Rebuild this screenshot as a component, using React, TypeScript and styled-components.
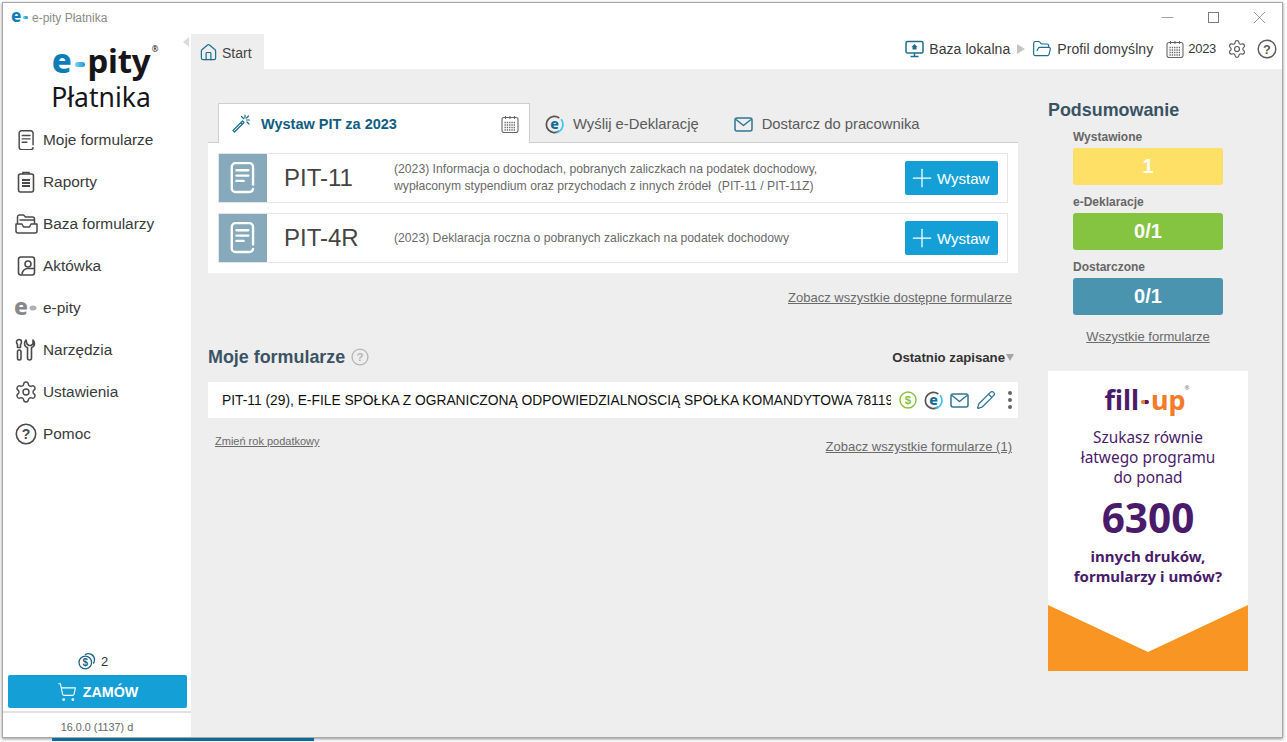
import React from "react";
import styled, { createGlobalStyle } from "styled-components";
import { Settings, Pencil, ShoppingCart, Plus, House, FolderOpen, Minus, X } from "lucide-react";

const GlobalStyle = createGlobalStyle`
  html {
    overflow: hidden;
  }
  body {
    margin: 0;
    padding: 0;
    min-height: 100vh;
    background: #fff;
    font-family: "Liberation Sans", Arial, sans-serif;
  }
  * { box-sizing: border-box; }
`;

const Window = styled.div`
  position: relative;
  width: 1281px;
  height: 736px;
  margin: 2px 0 0 2px;
  border: 1px solid #a8a8a8;
  box-shadow: 0 1px 3px rgba(0, 0, 0, 0.45);
  background: #fff;
  display: flex;
  flex-direction: column;
`;

const TitleBar = styled.div`
  height: 29px;
  flex: none;
  display: flex;
  align-items: center;
  padding-left: 8px;
  font-size: 12px;
  color: #8a8a8a;
`;

const TitleMark = styled.span`
  font-family: "Noto Sans", sans-serif;
  font-weight: 800;
  font-size: 17px;
  line-height: 20px;
  color: #0f7db5;
  width: 21px;
  margin-top: -3px;
  display: flex;
  align-items: center;
`;

const TitleDot = styled.i`
  display: block;
  width: 5px;
  height: 3px;
  margin: 2px 0 0 2px;
  border-radius: 2px;
  background: linear-gradient(90deg, #6fcdf0, #128fcc);
`;

const WindowControls = styled.div`
  margin-left: auto;
  display: flex;
  color: #7d7d7d;
  margin-top: -1px;
`;

const WindowControl = styled.div`
  width: 46px;
  display: flex;
  justify-content: center;
  align-items: center;
  height: 20px;
`;

const MaxBox = styled.div`
  width: 11px;
  height: 11px;
  border: 1px solid #7d7d7d;
`;

const Body = styled.div`
  flex: 1;
  display: flex;
  min-height: 0;
`;

const Sidebar = styled.aside`
  position: relative;
  width: 188px;
  flex: none;
  display: flex;
  flex-direction: column;
  background: #fff;
`;

const CollapseArrow = styled.div`
  position: absolute;
  top: 5px;
  right: 2px;
  width: 0;
  height: 0;
  border-top: 5px solid transparent;
  border-bottom: 5px solid transparent;
  border-right: 6px solid #dcdcdc;
`;

const Logo = styled.div`
  height: 87px;
  flex: none;
  display: flex;
  flex-direction: column;
  align-items: center;
  padding-left: 8px;
  font-family: "Noto Sans", sans-serif;
  color: #15151a;
`;

const LogoTop = styled.div`
  position: relative;
  display: flex;
  align-items: center;
  height: 44px;
  margin-top: 7px;
  font-size: 33px;
  font-weight: 700;
  line-height: 44px;
  letter-spacing: -0.3px;
`;

const LogoE = styled.span`
  color: #0f7db5;
  font-weight: 800;
`;

const LogoDash = styled.i`
  display: block;
  width: 10px;
  height: 5px;
  margin: 6px 3px 0 3px;
  border-radius: 3px;
  background: linear-gradient(90deg, #7fd4f2, #1a97d6);
`;

const LogoReg = styled.span`
  position: absolute;
  top: 3px;
  right: -8px;
  font-size: 8px;
  line-height: 14px;
  font-weight: 400;
`;

const LogoSub = styled.div`
  font-size: 26.5px;
  line-height: 32px;
  margin-top: -2px;
`;

const Menu = styled.nav`
  display: flex;
  flex-direction: column;
`;

const MenuItem = styled.div`
  height: 42px;
  display: flex;
  align-items: center;
  color: #3a3a3a;
  font-size: 15.4px;
  padding-left: 40px;
  position: relative;
`;

const MenuIcon = styled.span`
  position: absolute;
  left: 11px;
  top: 10px;
  width: 24px;
  height: 22px;
  display: flex;
  justify-content: center;
  align-items: center;
  color: #4a4a4a;
`;

const SideBottom = styled.div`
  margin-top: auto;
  display: flex;
  flex-direction: column;
`;

const Credits = styled.div`
  height: 20px;
  display: flex;
  align-items: center;
  justify-content: center;
  gap: 5px;
  font-size: 13px;
  color: #333;
  padding-right: 8px;
`;

const OrderButton = styled.div`
  height: 33px;
  margin: 4px 4px 0 5px;
  background: #14a0d6;
  border-radius: 2px;
  display: flex;
  align-items: center;
  justify-content: center;
  gap: 6px;
  color: #fff;
  font-size: 14.3px;
  font-weight: 700;
`;

const SideRule = styled.div`
  height: 2px;
  margin-top: 3px;
  background: #e2e2e2;
`;

const Version = styled.div`
  height: 24px;
  padding-top: 6px;
  text-align: center;
  font-size: 10.8px;
  line-height: 16px;
  color: #666;
`;

const Main = styled.main`
  flex: 1;
  min-width: 0;
  display: flex;
  flex-direction: column;
`;

const TopBar = styled.div`
  height: 37px;
  flex: none;
  display: flex;
  align-items: flex-end;
`;

const StartTab = styled.div`
  width: 73px;
  height: 35px;
  background: #eeeeee;
  display: flex;
  align-items: center;
  padding: 2px 0 0 8px;
  gap: 4px;
  font-size: 14px;
  color: #444;
`;

const Status = styled.div`
  margin-left: auto;
  height: 35px;
  display: flex;
  align-items: center;
  padding: 0 5px 6px 0;
  font-size: 14px;
  letter-spacing: 0.07px;
  color: #3a3a3a;
`;

const StatusItem = styled.div<{ $left: number }>`
  display: flex;
  align-items: center;
  gap: 5px;
  margin-left: ${(p) => p.$left}px;
  color: #3a3a3a;
`;

const YearItem = styled(StatusItem)`
  gap: 4px;
  font-size: 13px;
  letter-spacing: -0.3px;
`;

const Crumb = styled.div`
  width: 0;
  height: 0;
  margin-left: 7px;
  border-top: 5px solid transparent;
  border-bottom: 5px solid transparent;
  border-left: 8px solid #c4c4c4;
`;

const Content = styled.div`
  flex: 1;
  background: #eeeeee;
  display: flex;
  padding: 34px 0 0 17px;
`;

const Center = styled.section`
  width: 810px;
  flex: none;
`;

const Tabs = styled.div`
  height: 40px;
  display: flex;
  padding-left: 10px;
  border-bottom: 1px solid #cfcfcf;
`;

const ActiveTab = styled.div`
  width: 312px;
  height: 40px;
  background: #fff;
  border: 1px solid #cfcfcf;
  border-bottom: 0;
  display: flex;
  align-items: center;
  padding: 0 10px 0 13px;
  font-size: 14.5px;
  font-weight: 700;
  color: #0f5d7f;
  gap: 10px;
`;

const TabCalendar = styled.span`
  margin-left: auto;
  display: flex;
`;

const Tab = styled.div<{ $left: number }>`
  display: flex;
  align-items: center;
  height: 40px;
  padding-top: 2px;
  margin-left: ${(p) => p.$left}px;
  gap: 9px;
  font-size: 14.8px;
  color: #5a5a5a;
`;

const Panel = styled.div`
  background: #fff;
  padding: 10px;
  display: flex;
  flex-direction: column;
  gap: 10px;
`;

const FormRow = styled.div`
  height: 50px;
  border: 1px solid #e6e6e6;
  display: flex;
  align-items: center;
  padding-right: 9px;
`;

const FormBadge = styled.div`
  width: 48px;
  height: 48px;
  flex: none;
  background: #86aabb;
  display: flex;
  align-items: center;
  justify-content: center;
  color: #fff;
`;

const FormName = styled.div`
  width: 127px;
  flex: none;
  padding-left: 17px;
  font-size: 24px;
  color: #444;
`;

const FormDesc = styled.div`
  flex: 1;
  font-size: 12.2px;
  line-height: 17px;
  color: #6a6a6a;
  white-space: pre-wrap;
`;

const AddButton = styled.div`
  width: 93px;
  height: 34px;
  flex: none;
  background: #14a0d6;
  border-radius: 2px;
  display: flex;
  align-items: center;
  padding-left: 2px;
  color: #fff;
  font-size: 15px;
`;

const Link = styled.a<{ $size?: number }>`
  font-size: ${(p) => p.$size ?? 13}px;
  line-height: 16px;
  color: #6a6a6a;
  text-decoration: underline;
`;

const LinkRow = styled.div`
  margin-top: 17px;
  padding-right: 6px;
  display: flex;
  justify-content: flex-end;
`;

const SectionHead = styled.div`
  margin-top: 39px;
  height: 24px;
  display: flex;
  align-items: center;
`;

const SectionTitle = styled.h2`
  margin: 0;
  font-size: 17.9px;
  font-weight: 700;
  color: #3a5364;
`;

const HeadHelp = styled.span`
  margin-left: 6px;
  display: flex;
  color: #b5b5b5;
`;

const Sort = styled.div`
  margin-left: auto;
  padding-right: 4px;
  display: flex;
  align-items: center;
  gap: 1px;
  font-size: 13.2px;
  font-weight: 700;
  color: #333;
`;

const SortArrow = styled.i`
  display: block;
  width: 0;
  height: 0;
  border-left: 4.5px solid transparent;
  border-right: 4.5px solid transparent;
  border-top: 7px solid #a5a5a5;
`;

const DocRow = styled.div`
  margin-top: 13px;
  height: 36px;
  background: #fff;
  display: flex;
  align-items: center;
  padding-left: 14px;
`;

const DocTitle = styled.div`
  width: 669px;
  flex: none;
  overflow: hidden;
  white-space: nowrap;
  font-size: 13.8px;
  color: #111;
`;

const DocIcons = styled.div`
  margin-left: 8px;
  display: flex;
  align-items: center;
  gap: 7px;
`;

const Kebab = styled.div`
  margin-left: 12px;
  display: flex;
  flex-direction: column;
  gap: 3px;
`;

const KebabDot = styled.i`
  display: block;
  width: 4px;
  height: 4px;
  border-radius: 50%;
  background: #666;
`;

const FootRow = styled.div`
  display: flex;
  justify-content: space-between;
  align-items: flex-start;
  padding: 15px 6px 0 7px;
`;

const FootRight = styled.div`
  margin-top: 4px;
`;

const Aside = styled.aside`
  width: 200px;
  flex: none;
  margin-left: 30px;
  margin-top: -4px;
`;

const AsideTitle = styled.h2`
  margin: 0;
  font-size: 17.9px;
  line-height: 22px;
  font-weight: 700;
  color: #3a5364;
`;

const Stats = styled.div`
  padding-left: 25px;
  width: 175px;
  margin-top: 8px;
  display: flex;
  flex-direction: column;
`;

const StatLabel = styled.div`
  font-size: 12px;
  line-height: 16px;
  font-weight: 700;
  color: #666;
  margin-bottom: 3px;
`;

const StatBar = styled.div<{ $color: string }>`
  height: 37px;
  margin-bottom: 9px;
  background: ${(p) => p.$color};
  border-radius: 3px;
  display: flex;
  align-items: center;
  justify-content: center;
  font-size: 20px;
  font-weight: 700;
  color: #fff;
`;

const StatsLink = styled.div`
  margin-top: 3px;
  text-align: center;
`;

const Promo = styled.div`
  position: relative;
  margin-top: 26px;
  width: 200px;
  height: 300px;
  background: #fff;
  display: flex;
  flex-direction: column;
  align-items: center;
  font-family: "Noto Sans", sans-serif;
  color: #4a1a6b;
  overflow: hidden;
`;

const PromoLogo = styled.div`
  position: relative;
  margin: 9px 6px 0 0;
  height: 40px;
  display: flex;
  align-items: center;
  font-size: 27px;
  line-height: 40px;
  font-weight: 700;
`;

const PromoUp = styled.span`
  color: #f47b2a;
`;

const PromoDash = styled.i`
  display: block;
  width: 8px;
  height: 4px;
  margin: 4px 2px 0 2px;
  border-radius: 2px;
  background: linear-gradient(90deg, #f47b2a 50%, #4a1a6b 50%);
`;

const PromoReg = styled.span`
  position: absolute;
  top: 2px;
  right: -4px;
  font-size: 6px;
  line-height: 12px;
  color: #777;
  font-weight: 400;
`;

const PromoText = styled.div`
  margin-top: 8px;
  font-size: 15.4px;
  line-height: 20px;
  text-align: center;
`;

const PromoNumber = styled.div`
  font-size: 40.5px;
  line-height: 48px;
  margin-top: 6px;
  font-weight: 700;
`;

const PromoStrong = styled.div`
  margin-top: 4px;
  font-size: 15px;
  line-height: 20px;
  font-weight: 700;
  text-align: center;
`;

const PromoChevron = styled.svg`
  position: absolute;
  left: 0;
  bottom: 0;
  display: block;
`;

const ProgressBar = styled.div`
  position: absolute;
  left: 49px;
  bottom: -4px;
  width: 262px;
  height: 3px;
  background: #0b6a9a;
`;

type IconProps = { size?: number; color?: string; width?: number };

const FormIcon = ({ size = 24, color = "currentColor", width = 2 }: IconProps) => (
  <svg width={size} height={size * 1.2} viewBox="0 0 22 26.4" fill="none" stroke={color} strokeWidth={width} strokeLinecap="round">
    <path d="M19.5 19V4a3 3 0 0 0-3-3h-12a3 3 0 0 0-3 3v18.4a3 3 0 0 0 3 3h12a3 3 0 0 0 3-2.6" />
    <path d="M5.5 7h10M5.5 11.5h10M5.5 16h6" />
  </svg>
);

const ClipboardIcon = () => (
  <svg width="18" height="22" viewBox="0 0 18 22" fill="none" stroke="currentColor" strokeWidth="1.6">
    <rect x="1.5" y="3" width="15" height="18" rx="2" />
    <path d="M6 3V1.5h6V3" />
    <path d="M5 9h8M5 12h8M5 15h8" strokeWidth="2" />
  </svg>
);

const FoldersIcon = () => (
  <svg width="23" height="22" viewBox="0 0 23 22" fill="none" stroke="currentColor" strokeWidth="1.5" strokeLinejoin="round">
    <path d="M2.5 11V4a2 2 0 0 1 2-2h4l2 2h7a2 2 0 0 1 2 2v5" />
    <path d="M4.5 7h15" />
    <path d="M1 11h6l1.5 3h6l1.5-3h6v7a2 2 0 0 1-2 2H3a2 2 0 0 1-2-2z" />
  </svg>
);

const BriefIcon = () => (
  <svg width="19" height="22" viewBox="0 0 19 22" fill="none" stroke="currentColor" strokeWidth="1.6">
    <path d="M4 2h11a2.500 2.500 0 0 1 2.500 2.500v13a2.500 2.500 0 0 1-2.500 2.500H4a2.500 2.500 0 0 1-2.500-2.500v-13A2.500 2.500 0 0 1 4 2z" />
    <circle cx="11" cy="9" r="3" />
    <path d="M5 19.500c.5-4 3-6 6-6h6" />
  </svg>
);

const EMarkGrey = () => (
  <svg width="24" height="18" viewBox="0 0 24 18">
    <text x="0" y="16" fontFamily="Noto Sans, sans-serif" fontWeight="800" fontSize="23" fill="#888">e</text>
    <ellipse cx="19" cy="9" rx="3.500" ry="2.500" fill="#b0b0b0" />
  </svg>
);

const ToolsIcon = () => (
  <svg width="22" height="24" viewBox="0 0 22 24" fill="none" stroke="currentColor" strokeWidth="1.6" strokeLinejoin="round">
    <path d="M4 1.500a2.500 2.500 0 0 1 2.500 2.500c0 1-.5 2-1 2.500v3h-3v-3c-.5-.5-1-1.500-1-2.500A2.500 2.500 0 0 1 4 1.500z" />
    <rect x="2.500" y="12" width="3.500" height="10" rx="1.700" />
    <path d="M11 2c-1 1-1.500 2.500-1.500 3.500 0 2 1.200 3.500 3 4V20a2 2 0 0 0 4 0V9.500c1.800-.5 3-2 3-4 0-1-.5-2.500-1.500-3.500v4l-2 1.500h-2l-2-1.500z" />
  </svg>
);

const HelpIcon = ({ size = 22, color = "currentColor" }: IconProps) => (
  <svg width={size} height={size} viewBox="0 0 22 22" fill="none">
    <circle cx="11" cy="11" r="9.700" stroke={color} strokeWidth="1.6" />
    <text x="11" y="16" textAnchor="middle" fontFamily="Liberation Sans, sans-serif" fontWeight="700" fontSize="14" fill={color}>?</text>
  </svg>
);

const CoinsIcon = () => (
  <svg width="18" height="18" viewBox="0 0 18 18" fill="none" stroke="#1d6484" strokeWidth="1.300">
    <path d="M7 2.800A6 6 0 0 1 16.500 8c0 1.500-.5 2.600-1.300 3.500" />
    <circle cx="7.300" cy="10.500" r="6.300" />
    <text x="7.300" y="14" textAnchor="middle" fontFamily="Liberation Sans, sans-serif" fontWeight="700" fontSize="10" fill="#1d6484" stroke="none">$</text>
  </svg>
);

const MonitorIcon = () => (
  <svg width="19" height="18" viewBox="0 0 19 18" fill="none" stroke="#1d6e8e" strokeWidth="1.500">
    <rect x="1" y="1.500" width="17" height="11.500" rx="1.500" />
    <path d="M9.500 13v3M5.500 16.500h8" />
    <path d="M9.500 4l-3 3h1v2.500h4V7h1z" fill="#1d6e8e" stroke="none" />
  </svg>
);

const CalendarIcon = ({ size = 18 }: IconProps) => (
  <svg width={size} height={size} viewBox="0 0 18 18" fill="none" stroke="#666" strokeWidth="1.100">
    <rect x="1" y="2.500" width="16" height="15" rx="2" />
    <path d="M4.500 1v3M9 1v3M13.500 1v3" />
    <path d="M3.500 7.500h11M3.500 10h11M3.500 12.500h11M3.500 15h11" strokeDasharray="1.300 1" strokeWidth="1.300" />
  </svg>
);

const WandIcon = () => (
  <svg width="19" height="19" viewBox="0 0 19 19" fill="none" stroke="#1d6e8e" strokeWidth="1.200" strokeLinejoin="round">
    <path d="M1 16.500L2.500 18l9.500-9.500L10.500 7z" />
    <path d="M8.800 8.800l1.500 1.500" />
    <path d="M13 1v3M17.500 6h-3M9.500 2.500l2 2M17 10l-2-2M16.500 2l-2 2" strokeLinecap="round" />
  </svg>
);

const EBadge = ({ size = 20 }: IconProps) => (
  <svg width={size} height={size} viewBox="0 0 20 20" fill="none">
    <path d="M15 3.200A8.500 8.500 0 1 0 15 16.800" stroke="#555" strokeWidth="1.800" />
    <path d="M17 4.500a8.800 8.800 0 0 1-5 14" stroke="#3cc3ee" strokeWidth="1.800" />
    <text x="10" y="15" textAnchor="middle" fontFamily="Noto Sans, sans-serif" fontWeight="800" fontSize="15" fill="#0f6a96">e</text>
  </svg>
);

const MailIcon = () => (
  <svg width="19" height="15" viewBox="0 0 19 15" fill="none" stroke="#2f7593" strokeWidth="1.500" strokeLinejoin="round">
    <rect x="1" y="1" width="17" height="13" rx="2" />
    <path d="M2 2.500l7.500 6 7.500-6" />
  </svg>
);

const DollarBadge = () => (
  <svg width="18" height="18" viewBox="0 0 18 18" fill="none">
    <circle cx="9" cy="9" r="8" stroke="#8cc13f" strokeWidth="1.500" />
    <text x="9" y="13" textAnchor="middle" fontFamily="Liberation Sans, sans-serif" fontWeight="700" fontSize="11.500" fill="#8cc13f">$</text>
  </svg>
);

const menu: [string, React.ReactNode][] = [
  ["Moje formularze", <FormIcon size={17} width={1.9} />],
  ["Raporty", <ClipboardIcon />],
  ["Baza formularzy", <FoldersIcon />],
  ["Aktówka", <BriefIcon />],
  ["e-pity", <EMarkGrey />],
  ["Narzędzia", <ToolsIcon />],
  ["Ustawienia", <Settings size={24} strokeWidth={1.4} />],
  ["Pomoc", <HelpIcon size={22} />],
];

const forms = [
  {
    name: "PIT-11",
    desc: "(2023) Informacja o dochodach, pobranych zaliczkach na podatek dochodowy,\nwypłaconym stypendium oraz przychodach z innych źródeł  (PIT-11 / PIT-11Z)",
  },
  { name: "PIT-4R", desc: "(2023) Deklaracja roczna o pobranych zaliczkach na podatek dochodowy" },
];

const App = () => (
  <>
    <GlobalStyle />
    <Window>
      <TitleBar>
        <TitleMark>
          e<TitleDot />
        </TitleMark>
        e-pity Płatnika
        <WindowControls>
          <WindowControl>
            <Minus size={19} strokeWidth={0.9} />
          </WindowControl>
          <WindowControl>
            <MaxBox />
          </WindowControl>
          <WindowControl>
            <X size={21} strokeWidth={0.9} />
          </WindowControl>
        </WindowControls>
      </TitleBar>
      <Body>
        <Sidebar>
          <CollapseArrow />
          <Logo>
            <LogoTop>
              <LogoE>e</LogoE>
              <LogoDash />
              pity
              <LogoReg>®</LogoReg>
            </LogoTop>
            <LogoSub>Płatnika</LogoSub>
          </Logo>
          <Menu>
            {menu.map(([label, icon]) => (
              <MenuItem key={label}>
                <MenuIcon>{icon}</MenuIcon>
                {label}
              </MenuItem>
            ))}
          </Menu>
          <SideBottom>
            <Credits>
              <CoinsIcon />2
            </Credits>
            <OrderButton>
              <ShoppingCart size={20} strokeWidth={1.3} />
              ZAMÓW
            </OrderButton>
            <SideRule />
            <Version>16.0.0 (1137) d</Version>
          </SideBottom>
        </Sidebar>
        <Main>
          <TopBar>
            <StartTab>
              <House size={19} strokeWidth={1.5} color="#1d6e8e" />
              Start
            </StartTab>
            <Status>
              <StatusItem $left={0}>
                <MonitorIcon />
                Baza lokalna
              </StatusItem>
              <Crumb />
              <StatusItem $left={7}>
                <FolderOpen size={20} strokeWidth={1.4} color="#1d6e8e" />
                Profil domyślny
              </StatusItem>
              <YearItem $left={13}>
                <CalendarIcon />
                2023
              </YearItem>
              <StatusItem $left={11}>
                <Settings size={20} strokeWidth={1.4} color="#5a5a5a" />
              </StatusItem>
              <StatusItem $left={10}>
                <HelpIcon size={20} color="#5a5a5a" />
              </StatusItem>
            </Status>
          </TopBar>
          <Content>
            <Center>
              <Tabs>
                <ActiveTab>
                  <WandIcon />
                  Wystaw PIT za 2023
                  <TabCalendar>
                    <CalendarIcon size={18} />
                  </TabCalendar>
                </ActiveTab>
                <Tab $left={15}>
                  <EBadge size={19} />
                  Wyślij e-Deklarację
                </Tab>
                <Tab $left={35}>
                  <MailIcon />
                  Dostarcz do pracownika
                </Tab>
              </Tabs>
              <Panel>
                {forms.map((f) => (
                  <FormRow key={f.name}>
                    <FormBadge>
                      <FormIcon size={26} width={2} />
                    </FormBadge>
                    <FormName>{f.name}</FormName>
                    <FormDesc>{f.desc}</FormDesc>
                    <AddButton>
                      <Plus size={30} strokeWidth={1} />
                      Wystaw
                    </AddButton>
                  </FormRow>
                ))}
              </Panel>
              <LinkRow>
                <Link>Zobacz wszystkie dostępne formularze</Link>
              </LinkRow>
              <SectionHead>
                <SectionTitle>Moje formularze</SectionTitle>
                <HeadHelp>
                  <HelpIcon size={18} color="#b5b5b5" />
                </HeadHelp>
                <Sort>
                  Ostatnio zapisane
                  <SortArrow />
                </Sort>
              </SectionHead>
              <DocRow>
                <DocTitle>PIT-11 (29), E-FILE SPÓŁKA Z OGRANICZONĄ ODPOWIEDZIALNOŚCIĄ SPÓŁKA KOMANDYTOWA 7811967834</DocTitle>
                <DocIcons>
                  <DollarBadge />
                  <EBadge size={19} />
                  <MailIcon />
                  <Pencil size={20} strokeWidth={1.5} color="#2f7593" />
                </DocIcons>
                <Kebab>
                  <KebabDot />
                  <KebabDot />
                  <KebabDot />
                </Kebab>
              </DocRow>
              <FootRow>
                <Link $size={11}>Zmień rok podatkowy</Link>
                <FootRight>
                  <Link>Zobacz wszystkie formularze (1)</Link>
                </FootRight>
              </FootRow>
            </Center>
            <Aside>
              <AsideTitle>Podsumowanie</AsideTitle>
              <Stats>
                <StatLabel>Wystawione</StatLabel>
                <StatBar $color="#ffe066">1</StatBar>
                <StatLabel>e-Deklaracje</StatLabel>
                <StatBar $color="#85c440">0/1</StatBar>
                <StatLabel>Dostarczone</StatLabel>
                <StatBar $color="#4a94b0">0/1</StatBar>
                <StatsLink>
                  <Link>Wszystkie formularze</Link>
                </StatsLink>
              </Stats>
              <Promo>
                <PromoLogo>
                  fill
                  <PromoDash />
                  <PromoUp>up</PromoUp>
                  <PromoReg>®</PromoReg>
                </PromoLogo>
                <PromoText>
                  Szukasz równie
                  <br />
                  łatwego programu
                  <br />
                  do ponad
                </PromoText>
                <PromoNumber>6300</PromoNumber>
                <PromoStrong>
                  innych druków,
                  <br />
                  formularzy i umów?
                </PromoStrong>
                <PromoChevron width="200" height="66" viewBox="0 0 200 66">
                  <path d="M0 0L100 47L200 0V66H0z" fill="#f99522" />
                </PromoChevron>
              </Promo>
            </Aside>
          </Content>
        </Main>
      </Body>
      <ProgressBar />
    </Window>
  </>
);

export default App;
